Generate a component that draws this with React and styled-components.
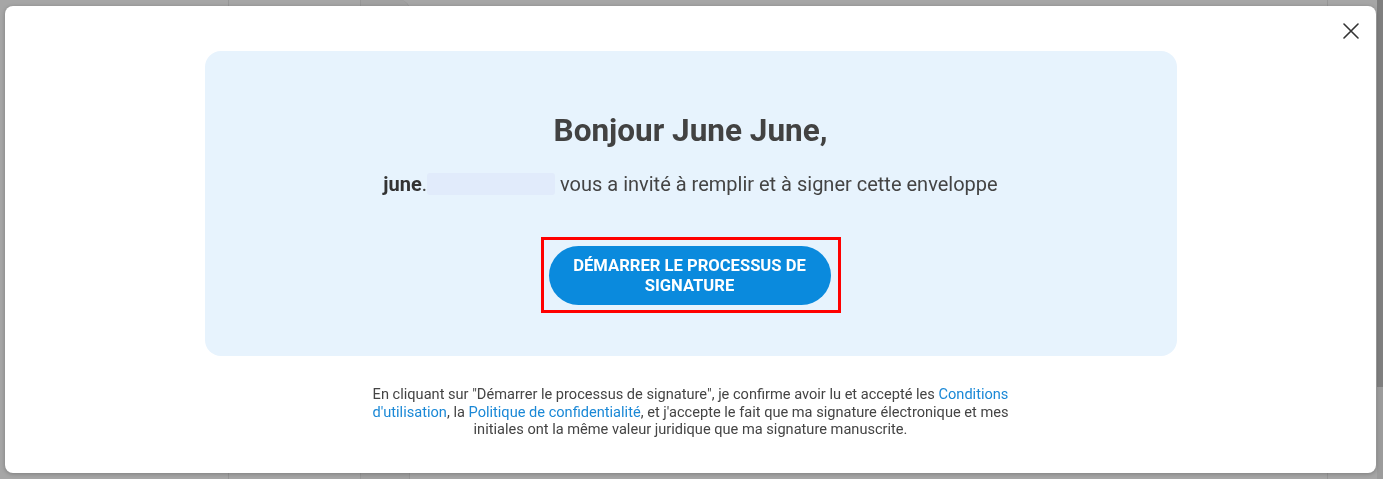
import React from 'react'
import styled, { createGlobalStyle } from 'styled-components'

const GlobalStyle = createGlobalStyle`
  html, body {
    margin: 0;
    padding: 0;
    height: 100%;
    overflow: hidden;
    background: #a6a6a6;
    font-family: Roboto, "Liberation Sans", Arial, sans-serif;
  }
  #root { height: 100%; }
`

const Page = styled.div`
  display: flex;
  height: 100vh;
  background: #a6a6a6;
`

const PageColumn = styled.div`
  width: ${p => p.$w}px;
  flex: ${p => (p.$grow ? 1 : 'none')};
  border-right: 1px solid #979797;
  background: ${p => p.$bg || 'transparent'};
  border-top-right-radius: ${p => p.$round || 0}px;
`

const Overlay = styled.div`
  position: fixed;
  inset: 0;
  display: flex;
  padding: 6px 0 6px 5px;
  gap: 1px;
`

const Modal = styled.div`
  flex: 1;
  position: relative;
  background: #fff;
  border-radius: 8px;
  box-shadow: 0 1px 4px rgba(0, 0, 0, 0.25);
  padding: 45px 24px 0;
  display: flex;
  flex-direction: column;
  align-items: center;
`

const Scrollbar = styled.div`
  width: 6px;
  margin: -6px 0;
  display: flex;
  flex-direction: column;
  background: #9c9c9c;
`

const Thumb = styled.div`
  height: 387px;
  background: #7f7f7f;
`

const CloseButton = styled.button`
  position: absolute;
  top: 11px;
  right: 11px;
  width: 28px;
  height: 28px;
  padding: 0;
  border: none;
  background: none;
  display: flex;
  align-items: center;
  justify-content: center;
  cursor: pointer;
`

const Card = styled.div`
  width: 972px;
  box-sizing: border-box;
  background: #e7f3fd;
  border-radius: 16px;
  padding: 61px 24px 43px;
  display: flex;
  flex-direction: column;
  align-items: center;
`

const Title = styled.h1`
  margin: 0;
  font-size: 31.5px;
  line-height: 38px;
  font-weight: 700;
  color: #424242;
`

const Invite = styled.p`
  margin: 22px 0 0;
  font-size: 20px;
  line-height: 24px;
  color: #444;
  display: flex;
  align-items: center;
`

const Sender = styled.strong`
  font-weight: 700;
  color: #333;
`

const Redacted = styled.span`
  display: inline-block;
  width: 128px;
  height: 22px;
  margin: 0 5px 0 0;
  border-radius: 3px;
  background: #e1ebfb;
`

const Highlight = styled.div`
  margin-top: 41px;
  border: 3px solid #ff0000;
  padding: 6px 7px 5px 5px;
`

const StartButton = styled.button`
  width: 282px;
  height: 59px;
  border: none;
  border-radius: 30px;
  background: #0a8add;
  color: #fff;
  font-family: inherit;
  font-size: 16.6px;
  line-height: 20px;
  font-weight: 700;
  text-transform: uppercase;
  padding: 0 16px;
  cursor: pointer;
`

const Legal = styled.p`
  margin: 30px 0 0;
  max-width: 645px;
  text-align: center;
  font-size: 14.6px;
  line-height: 17.5px;
  color: #444;
`

const Link = styled.a`
  color: #1a88d6;
  text-decoration: none;
`

export default function App() {
  return (
    <>
      <GlobalStyle />
      <Page>
        <PageColumn $w={228} />
        <PageColumn $w={131} />
        <PageColumn $w={48} $bg="#a1a1a1" $round={10} />
        <PageColumn $grow />
        <PageColumn $w={54} />
      </Page>
      <Overlay>
        <Modal>
          <CloseButton aria-label="Fermer">
            <svg width="16" height="16" viewBox="0 0 16 16">
              <path d="M1 1 L15 15 M15 1 L1 15" stroke="#333" strokeWidth="1.6" strokeLinecap="round" />
            </svg>
          </CloseButton>
          <Card>
            <Title>Bonjour June June,</Title>
            <Invite>
              <Sender>june</Sender>.
              <Redacted />
              vous a invité à remplir et à signer cette enveloppe
            </Invite>
            <Highlight>
              <StartButton>Démarrer le processus de signature</StartButton>
            </Highlight>
          </Card>
          <Legal>
            En cliquant sur "Démarrer le processus de signature", je confirme avoir lu et accepté les{' '}
            <Link href="#">Conditions d'utilisation</Link>, la{' '}
            <Link href="#">Politique de confidentialité</Link>, et j'accepte le fait que ma signature
            électronique et mes initiales ont la même valeur juridique que ma signature manuscrite.
          </Legal>
        </Modal>
        <Scrollbar>
          <Thumb />
        </Scrollbar>
      </Overlay>
    </>
  )
}
